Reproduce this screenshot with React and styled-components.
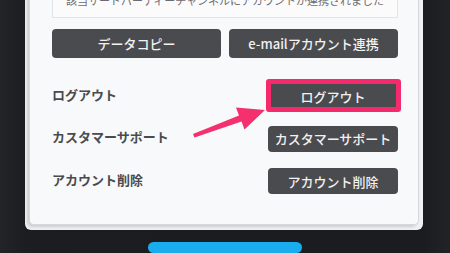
import React from "react";
import styled, { createGlobalStyle } from "styled-components";

const GlobalStyle = createGlobalStyle`
  body {
    margin: 0;
    background: #1d1e22;
    overflow: hidden;
  }
`;

const Screen = styled.div`
  position: relative;
  width: 450px;
  height: 253px;
  overflow: hidden;
  display: flex;
  flex-direction: column;
  padding-left: 25px;
  box-sizing: border-box;
  background: linear-gradient(90deg, #232428 0%, #1c1d21 6%, #1b1c20 94%, #222327 100%);
  font-family: "Noto Sans CJK JP", "Noto Sans", sans-serif;
`;

const Frame = styled.div`
  width: 398px;
  margin-top: -30px;
  padding: 0 4px 5px 4px;
  box-sizing: border-box;
  background: #eef0f2;
  border-radius: 0 0 6px 6px;
`;

const Card = styled.div`
  background: #f8f9fb;
  border: 1px solid #d6d8db;
  border-top: none;
  border-radius: 0 0 5px 5px;
  box-shadow: -2px 2px 3px rgba(0, 0, 0, 0.14);
  padding: 10px 20px 30px 22px;
`;

const InfoBox = styled.div`
  border: 1px solid #e2e4e7;
  background: #fbfbfc;
  padding: 12px 8px 10px;
  text-align: center;
  font-size: 11px;
  line-height: 14px;
  color: #6b6c70;
  white-space: nowrap;
`;

const ButtonRow = styled.div`
  display: grid;
  grid-template-columns: 1fr 1fr;
  gap: 8px;
  margin-top: 11px;
`;

const DarkButton = styled.div`
  height: ${(p) => p.h || 26}px;
  display: flex;
  align-items: center;
  justify-content: center;
  background: #4a4b4f;
  border-radius: 4px;
  color: #f1f1f1;
  font-size: 13px;
  font-weight: 500;
  white-space: nowrap;
`;

const SettingList = styled.div`
  display: flex;
  flex-direction: column;
  gap: 16.5px;
  margin-top: 25px;
`;

const SettingRow = styled.div`
  display: grid;
  grid-template-columns: 1fr 130px;
  align-items: center;
`;

const Label = styled.div`
  font-size: 13px;
  font-weight: 700;
  line-height: 16px;
  margin-top: -3px;
  color: #4a4b4e;
  white-space: nowrap;
`;

const ButtonWrap = styled.div`
  position: relative;
`;

const Highlight = styled.div`
  position: absolute;
  top: -4px;
  right: -3px;
  bottom: -3px;
  left: -2px;
  border: 5px solid #f42a6c;
  border-radius: 3px;
`;

const BlueButton = styled.div`
  width: 154px;
  height: 30px;
  margin-top: 12px;
  margin-left: 123px;
  background: #19adf0;
  border-radius: 6px;
`;

const Arrow = styled.svg`
  position: absolute;
  left: 0;
  top: 0;
  pointer-events: none;
`;

const settings = [
  { label: "ログアウト", button: "ログアウト", marked: true },
  { label: "カスタマーサポート", button: "カスタマーサポート" },
  { label: "アカウント削除", button: "アカウント削除" },
];

export default function App() {
  return (
    <>
      <GlobalStyle />
      <Screen>
        <Frame>
          <Card>
            <InfoBox>該当サードパーティーチャンネルにアカウントが連携されました</InfoBox>
            <ButtonRow>
              <DarkButton h={29}>データコピー</DarkButton>
              <DarkButton h={29}>e-mailアカウント連携</DarkButton>
            </ButtonRow>
            <SettingList>
              {settings.map((s) => (
                <SettingRow key={s.label}>
                  <Label>{s.label}</Label>
                  <ButtonWrap>
                    <DarkButton>{s.button}</DarkButton>
                    {s.marked && <Highlight />}
                  </ButtonWrap>
                </SettingRow>
              ))}
            </SettingList>
          </Card>
        </Frame>
        <BlueButton />
        <Arrow width="450" height="253" viewBox="0 0 450 253">
          <polygon
            points="193,134 239,115.5 236,107.5 265,110 244.5,129.5 241.5,121.5 194.5,137.5"
            fill="#f4306e"
          />
        </Arrow>
      </Screen>
    </>
  );
}
